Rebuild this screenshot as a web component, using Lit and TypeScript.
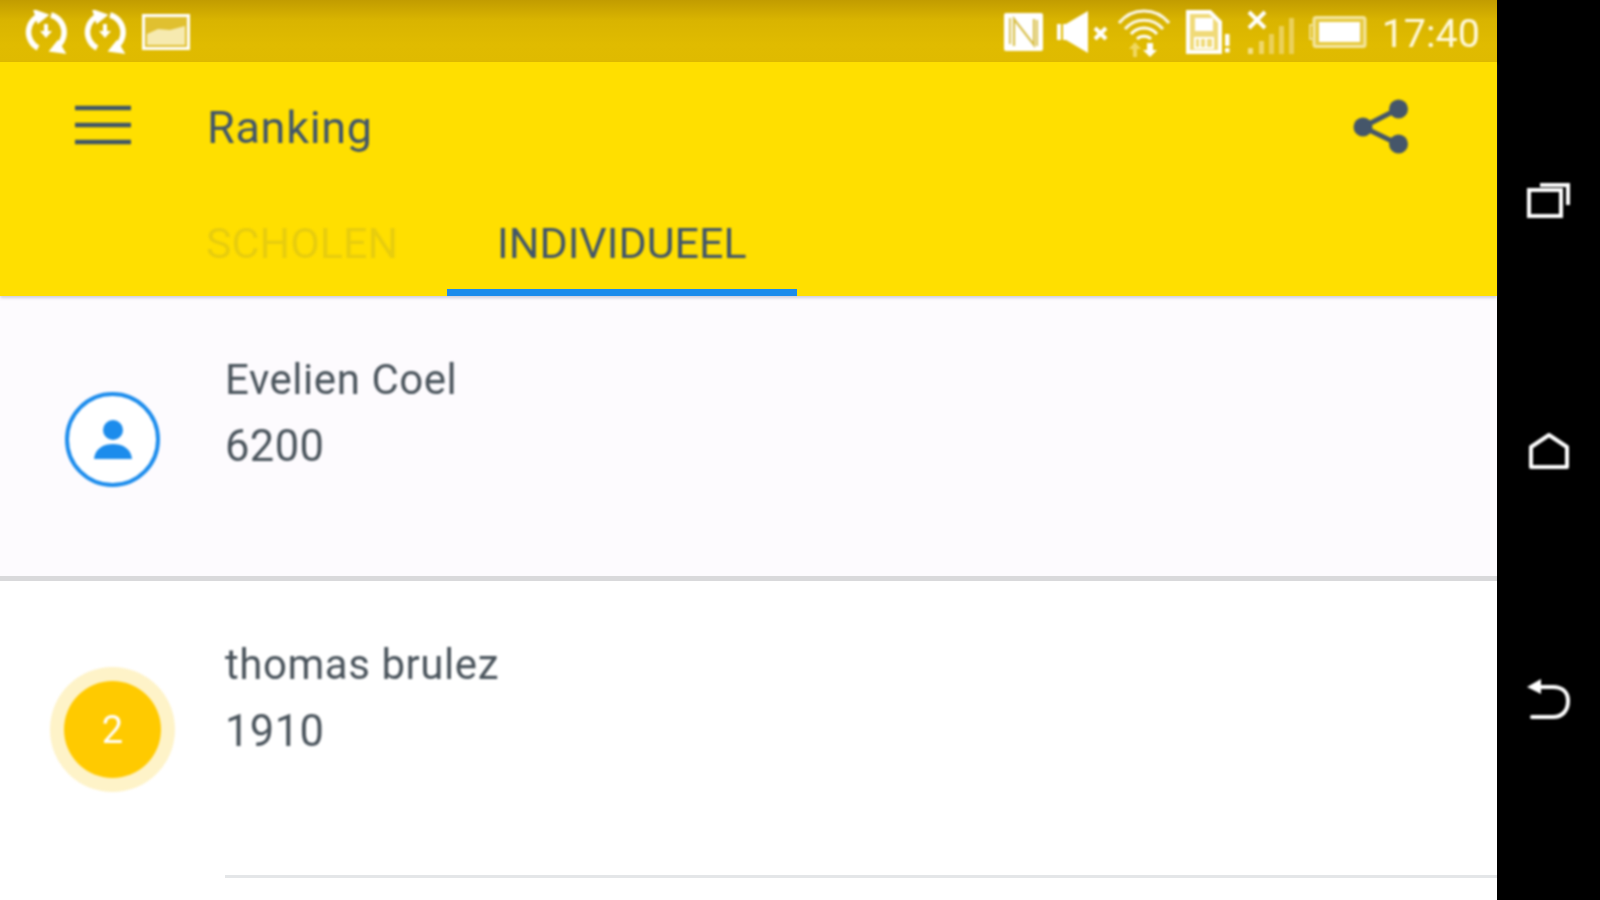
import { LitElement, html, css } from "lit";
import { customElement } from "lit/decorators.js";

const sync = html`<svg class="soft ic" width="44" height="44" viewBox="0 0 44 44" fill="none" stroke="#fff" stroke-width="5.5">
  <path d="M17 5 A18 18 0 0 0 14 38" /><path d="M10 0 L24 5 L14 13 Z" fill="#fff" stroke-width="1.5"/>
  <path d="M27 5 A18 18 0 0 1 31 38" /><path d="M41 43 L26 41 L34 31 Z" fill="#fff" stroke-width="1.5"/>
  <path d="M22 14 V22" stroke-width="4"/><path d="M16 21 H28 L22 28 Z" fill="#fff" stroke="none"/>
</svg>`;

@customElement("app-root")
export class AppRoot extends LitElement {
  static styles = css`
    :host { display: block; width: 1600px; height: 900px; overflow: hidden; font-family: Roboto, "Noto Sans", sans-serif; color: #4a545c; }
    .page { display: flex; width: 1600px; height: 900px; }
    .main { width: 1497px; display: flex; flex-direction: column; background: #fff; }
    .soft { filter: blur(0.8px); }
    .ic { display: block; flex: none; }

    .status { height: 62px; flex: none; display: flex; align-items: center; background: linear-gradient(#c29c00 0, #d9b400 20px, #e0bb00 45px, #dfba00 100%); padding: 1px 17px 0 24px; box-sizing: border-box; }
    .status .left { display: flex; align-items: center; gap: 15px; }
    .status .right { margin-left: auto; display: flex; align-items: center; }
    .time { color: #fff9dc; font-size: 39.5px; font-weight: 400; margin-left: 15px; line-height: 61px; position: relative; top: 2px; }

    .bar { height: 234px; flex: none; background: #ffdf00; display: flex; flex-direction: column; box-shadow: 0 2px 3px rgba(90,90,130,.28); position: relative; }
    .top { display: flex; align-items: center; height: 126px; padding: 0 88px 0 75px; }
    .title { margin-left: 76px; font-size: 45px; letter-spacing: .7px; color: #42566a; line-height: 1; position: relative; top: 2px; }
    .share { margin-left: auto; position: relative; top: 2px; }
    .tabs { display: flex; margin-left: 156px; margin-top: 14px; }
    .tab { padding: 0 50px; height: 94px; box-sizing: border-box; font-size: 43px; line-height: 82px; color: #42566a; }
    .tab.off { color: rgba(66,86,106,.13); padding-right: 49px; }
    .tab.on { border-bottom: 7px solid #1c8cec; }

    .row { display: flex; flex: none; }
    .row.me { background: #fdfbfe; height: 285px; box-sizing: border-box; border-bottom: 5px solid #d9d9db; }
    .row.other { flex: 1; }
    .lead { width: 225px; flex: none; display: flex; justify-content: center; }
    .me .lead { padding-top: 96px; }
    .other .lead { padding-top: 100px; }
    .ring { width: 95px; height: 95px; box-sizing: border-box; border: 4px solid #1c8cec; border-radius: 50%; display: flex; align-items: center; justify-content: center; background: #fff; }
    .medal { width: 97px; height: 97px; border-radius: 50%; background: #ffca00; box-shadow: 0 0 0 14px #fef3c8; color: #fff; font-size: 38px; font-weight: 400; display: flex; align-items: center; justify-content: center; }
    .text { flex: 1; box-sizing: border-box; }
    .me .text { padding-top: 51px; }
    .other .text { padding-top: 51px; height: 297px; border-bottom: 3px solid #e4e6e8; }
    .name { line-height: 66px; letter-spacing: .55px; font-size: 42px; }
    .score { line-height: 66px; letter-spacing: .4px; font-size: 43.5px; margin-top: 1px; }

    .nav { flex: 1; background: #000; display: flex; flex-direction: column; align-items: center; padding-top: 181px; gap: 210px; box-shadow: inset 2px 0 3px rgba(0,0,0,.5); }
    .nav svg { display: block; }
  `;

  render() {
    return html`<div class="page">
      <div class="main">
        <div class="status">
          <div class="left">
            ${sync}${sync}
            <svg class="soft ic" width="48" height="36" viewBox="0 0 48 36">
              <rect x="1.500" y="1.500" width="45" height="33" fill="#e0c030" stroke="#fff" stroke-width="3"/>
              <path d="M5 20 L16 15 L28 16 L43 12 V31 H5 Z" fill="#f6eab0"/>
            </svg>
          </div>
          <div class="right">
            <svg class="soft ic" width="41" height="40" viewBox="0 0 41 40" style="margin-right:13px">
              <rect x="1" y="1" width="39" height="38" rx="2" fill="#fff"/>
              <path d="M11 34 V7 L31 33 V7" fill="none" stroke="#d8bf4a" stroke-width="2.200"/>
              <path d="M7 6 V32 M34 8 V34" fill="none" stroke="#d8bf4a" stroke-width="1.800"/>
            </svg>
            <svg class="soft ic" width="52" height="42" viewBox="0 0 52 42" style="margin-right:9px">
              <path d="M0 13 H9 L31 0 V42 L9 29 H0 Z" fill="#fff"/>
              <path d="M5 13 V29" stroke="#e0bb00" stroke-width="2"/>
              <path d="M38 17 L49 28 M49 17 L38 28" stroke="#fff" stroke-width="4"/>
            </svg>
            <svg class="soft ic" width="52" height="50" viewBox="0 0 52 50" fill="none" stroke="#fff" stroke-width="3" style="margin-right:16px">
              <path d="M1 16 A32 32 0 0 1 51 16" opacity=".9"/>
              <path d="M7 22 A25 25 0 0 1 45 22" opacity=".9"/>
              <path d="M13 27 A17 17 0 0 1 39 27"/>
              <path d="M19 32 A10 10 0 0 1 33 32"/>
              <path d="M17 35 L11 42 H15 V50 H19 V42 H23 Z" fill="#f0d860" stroke="none"/>
              <path d="M29 36 H35 V43 H39 L32 50 L25 43 H29 Z" fill="#fff" stroke="none"/>
            </svg>
            <svg class="soft ic" width="45" height="44" viewBox="0 0 45 44" style="margin-right:16px">
              <path d="M2 2 H24 L34 12 V42 H2 Z" fill="#f0da78" stroke="#fff" stroke-width="4"/>
              <rect x="9" y="8" width="18" height="13" fill="#fff"/>
              <path d="M9 28 H27 V38 H9 Z" fill="none" stroke="#fff" stroke-width="2"/>
              <path d="M14 28 V38 M20 28 V38" stroke="#fff" stroke-width="2"/>
              <rect x="39" y="24" width="4.500" height="12" fill="#fff"/><rect x="39" y="38" width="4.500" height="4.500" fill="#fff"/>
            </svg>
            <svg class="soft ic" width="48" height="44" viewBox="0 0 48 44" style="margin-right:14px">
              <path d="M2 2 L18 18 M18 2 L2 18" stroke="#fff" stroke-width="4"/>
              <rect x="1" y="38" width="5" height="6" fill="#f3e08a"/>
              <rect x="12" y="31" width="5" height="13" fill="#efd66a"/>
              <rect x="22" y="24" width="5" height="20" fill="#ebd05a"/>
              <rect x="32" y="16" width="5" height="28" fill="#ebd05a"/>
              <rect x="42" y="8" width="5" height="36" fill="#ebd05a"/>
            </svg>
            <svg class="soft ic" width="58" height="32" viewBox="0 0 58 32">
              <rect x="5" y="1.500" width="51" height="29" rx="2" fill="#e6c93c" stroke="#f4e5a0" stroke-width="3"/>
              <path d="M5 9 H1 V23 H5" fill="none" stroke="#f0de8a" stroke-width="2"/>
              <rect x="10" y="6" width="41" height="20" fill="#fff"/>
            </svg>
            <span class="time soft">17:40</span>
          </div>
        </div>
        <div class="bar">
          <div class="top">
            <svg class="soft ic" width="56" height="40" viewBox="0 0 56 40">
              <path d="M0 3 H56 M0 20 H56 M0 37 H56" stroke="#3f5568" stroke-width="4.600"/>
            </svg>
            <span class="title soft">Ranking</span>
            <svg class="share soft ic" width="56" height="56" viewBox="0 0 56 56" fill="#45566a">
              <circle cx="10" cy="28" r="9.500"/><circle cx="45.500" cy="10" r="9.500"/><circle cx="45.500" cy="45" r="9.500"/>
              <path d="M10 28 L45 10 M10 28 L45 45" stroke="#45566a" stroke-width="5"/>
            </svg>
          </div>
          <div class="tabs">
            <div class="tab off"><span class="soft" style="display:block">SCHOLEN</span></div>
            <div class="tab on"><span class="soft" style="display:block">INDIVIDUEEL</span></div>
          </div>
        </div>
        <div class="row me">
          <div class="lead">
            <div class="ring soft">
              <svg width="40" height="40" viewBox="0 0 40 40" fill="#1c8cec">
                <circle cx="20" cy="10" r="10"/>
                <path d="M1 39 C2 28 11 24 20 24 C29 24 38 28 39 39 Z"/>
              </svg>
            </div>
          </div>
          <div class="text">
            <div class="name soft">Evelien Coel</div>
            <div class="score soft">6200</div>
          </div>
        </div>
        <div class="row other">
          <div class="lead"><div class="medal soft">2</div></div>
          <div class="text">
            <div class="name soft">thomas brulez</div>
            <div class="score soft">1910</div>
          </div>
        </div>
      </div>
      <div class="nav">
        <svg class="soft" width="44" height="42" viewBox="0 0 44 42" fill="none" stroke="#fff" stroke-width="4">
          <rect x="2" y="9" width="32" height="26"/>
          <path d="M13 4 H41 V24"/>
        </svg>
        <svg class="soft" width="40" height="36" viewBox="0 0 40 36" fill="none" stroke="#fff" stroke-width="4">
          <path d="M2 14 L20 2 L38 14 V34 H2 Z" stroke-linejoin="round"/>
        </svg>
        <svg class="soft" width="44" height="42" viewBox="0 0 44 42" fill="none" stroke="#fff" stroke-width="4">
          <path d="M0 8 L14 0 V15 Z" fill="#fff" stroke="none"/>
          <path d="M12 8 H26 C36 8 41 14 41 22 C41 32 35 38 26 38 H5" stroke-linecap="round"/>
        </svg>
      </div>
    </div>`;
  }
}
